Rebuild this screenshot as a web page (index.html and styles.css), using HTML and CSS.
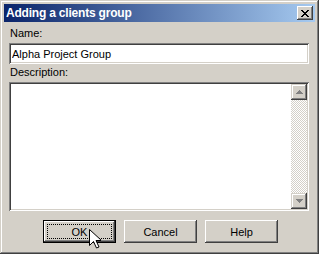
FILE: index.html
```html
<!DOCTYPE html>
<html lang="en">
<head>
  <meta charset="UTF-8">
  <title>Adding a clients group</title>
  <link rel="stylesheet" href="styles.css">
</head>
<body>
  <div class="dialog">
    <div class="titlebar">
      <span class="title">Adding a clients group</span>
      <button class="close" aria-label="Close">
        <svg width="8" height="7" viewBox="0 0 8 7">
          <path d="M0 0h2v1h1v1h2v-1h1v-1h2v1h-1v1h-1v1h-1v1h1v1h1v1h1v1h-2v-1h-1v-1h-2v1h-1v1h-2v-1h1v-1h1v-1h1v-1h-1v-1h-1v-1h-1z" fill="#000"/>
        </svg>
      </button>
    </div>

    <div class="body">
      <label class="label" for="name">Name:</label>
      <div class="field">
        <input id="name" type="text" value="Alpha Project Group">
      </div>

      <label class="label" for="desc">Description:</label>
      <div class="field memo">
        <div class="memo-text" id="desc"></div>
        <div class="scrollbar">
          <div class="sb-btn">
            <svg width="7" height="4" viewBox="0 0 7 4"><path d="M3 0h1v1h1v1h1v1h1v1h-7v-1h1v-1h1v-1h1z" fill="#808080"/></svg>
          </div>
          <div class="sb-track"></div>
          <div class="sb-btn">
            <svg width="7" height="4" viewBox="0 0 7 4"><path d="M0 0h7v1h-1v1h-1v1h-1v1h-1v-1h-1v-1h-1v-1h-1z" fill="#808080"/></svg>
          </div>
        </div>
      </div>

      <div class="buttons">
        <button class="btn default"><span class="focus">OK</span></button>
        <button class="btn">Cancel</button>
        <button class="btn">Help</button>
      </div>
    </div>

    <svg class="cursor" width="12" height="20" viewBox="0 0 12 20">
      <path d="M0.5 0.5v16l4-4 3 6.5 2.5-1-3-6.5h5.5z" fill="#fff" stroke="#000" stroke-width="1"/>
    </svg>
  </div>
</body>
</html>
```

FILE: styles.css
```css
body {
  margin: 0;
  font-family: "Liberation Sans", Arial, sans-serif;
  font-size: 11px;
  color: #000;
}

.dialog {
  position: relative;
  width: 319px;
  height: 254px;
  box-sizing: border-box;
  padding: 4px;
  background: #d4d0c8;
  box-shadow: inset -1px -1px #404040, inset 1px 1px #d4d0c8,
              inset -2px -2px #808080, inset 2px 2px #fff;
  display: flex;
  flex-direction: column;
}

.titlebar {
  height: 18px;
  display: flex;
  align-items: center;
  justify-content: space-between;
  padding: 0 2px 0 2px;
  background: linear-gradient(to right, #0a246a, #a6caf0);
}

.title {
  color: #fff;
  font-weight: bold;
  font-size: 12px;
  letter-spacing: -0.2px;
}

.close {
  width: 16px;
  height: 14px;
  padding: 0;
  border: none;
  background: #d4d0c8;
  display: flex;
  align-items: center;
  justify-content: center;
  box-shadow: inset -1px -1px #404040, inset 1px 1px #fff,
              inset -2px -2px #808080, inset 2px 2px #d4d0c8;
}

.body {
  flex: 1;
  display: flex;
  flex-direction: column;
  padding: 5px 6px 0 5px;
}

.label {
  display: block;
  line-height: 13px;
  margin-left: 1px;
}

.field {
  box-sizing: border-box;
  background: #fff;
  box-shadow: inset 1px 1px #808080, inset -1px -1px #fff,
              inset 2px 2px #404040, inset -2px -2px #d4d0c8;
  padding: 2px;
}

.field input {
  display: block;
  width: 100%;
  height: 17px;
  box-sizing: border-box;
  border: none;
  outline: none;
  padding: 1px 1px;
  font: inherit;
  background: transparent;
}

.label + .field {
  margin-top: 3px;
}

.field + .label {
  margin-top: 2px;
}

.memo {
  height: 129px;
  margin-top: 6px;
  display: flex;
}

.memo-text {
  flex: 1;
}

.scrollbar {
  width: 16px;
  display: flex;
  flex-direction: column;
}

.sb-btn {
  height: 16px;
  box-sizing: border-box;
  background: #d4d0c8;
  display: flex;
  align-items: center;
  justify-content: center;
  box-shadow: inset -1px -1px #404040, inset 1px 1px #d4d0c8,
              inset -2px -2px #808080, inset 2px 2px #fff;
}

.sb-track {
  flex: 1;
  background: repeating-conic-gradient(#d4d0c8 0 25%, #fff 0 50%) 0 0 / 2px 2px;
}

.buttons {
  display: flex;
  justify-content: center;
  gap: 8px;
  margin-top: 9px;
  margin-left: 3px;
}

.btn {
  width: 73px;
  height: 23px;
  border: none;
  padding: 0;
  font: inherit;
  background: #d4d0c8;
  box-shadow: inset -1px -1px #404040, inset 1px 1px #fff,
              inset -2px -2px #808080, inset 2px 2px #d4d0c8;
}

.btn.default {
  box-shadow: inset 0 0 0 1px #000, inset -2px -2px #404040, inset 2px 2px #fff,
              inset -3px -3px #808080;
  display: flex;
  align-items: stretch;
  padding: 4px;
}

.focus {
  flex: 1;
  display: flex;
  align-items: center;
  justify-content: center;
  outline: 1px dotted #000;
  outline-offset: -1px;
}

.cursor {
  position: absolute;
  left: 89px;
  top: 229px;
}
```
